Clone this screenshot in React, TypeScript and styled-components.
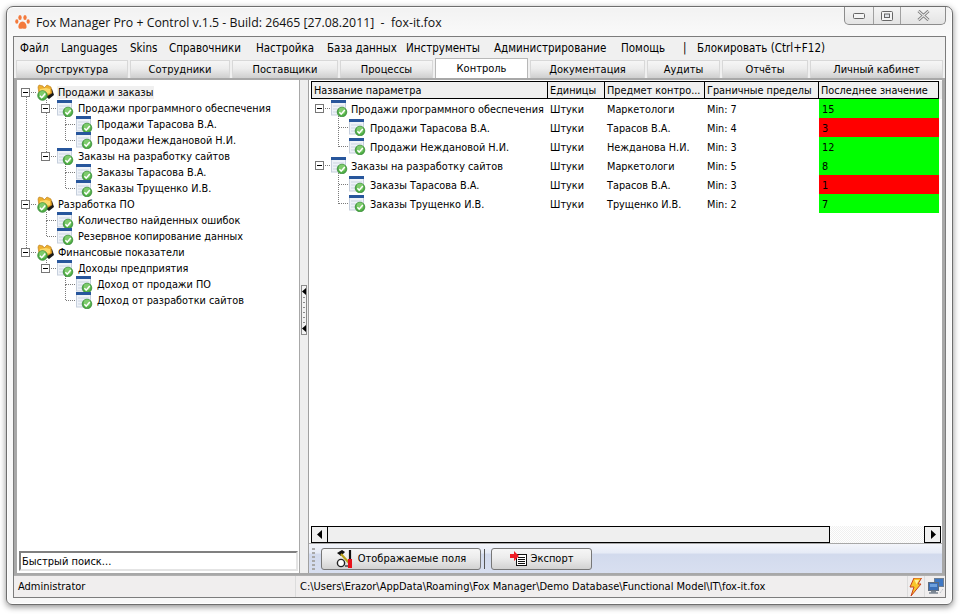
import React from 'react';
import styled, { createGlobalStyle } from 'styled-components';

const GlobalStyle = createGlobalStyle`
  html, body {
    margin: 0;
    background: #fff;
  }
  * {
    box-sizing: border-box;
  }
`;

const uiFont = `font-family: 'DejaVu Sans Condensed', 'DejaVu Sans', sans-serif; font-stretch: condensed; font-size: 10.8px;`;

const Root = styled.div`
  width: 961px;
  height: 616px;
  padding: 6px 8px 11px 6px;
  display: flex;
  overflow: hidden;
  ${uiFont}
  color: #000;
`;

const Win = styled.div`
  flex: 1;
  display: flex;
  flex-direction: column;
  padding: 0 6px 6px;
  border: 1px solid #6e6e6e;
  border-radius: 7px 7px 6px 6px;
  background: linear-gradient(180deg, #f2f2f2 0, #fafafa 30px, #f7f7f7 100%);
  box-shadow: 0 2px 6px rgba(0, 0, 0, 0.45), inset 0 0 0 1px rgba(255, 255, 255, 0.8);
`;

const TitleBar = styled.div`
  height: 29px;
  display: flex;
  align-items: flex-start;
  justify-content: space-between;
`;

const TitleLeft = styled.div`
  display: flex;
  align-items: center;
  gap: 6px;
  padding: 7px 0 0 2px;
`;

const TitleText = styled.span`
  font-family: 'Open Sans', sans-serif;
  font-stretch: normal;
  font-size: 12.3px;
  color: #111;
  white-space: pre;
`;

const CaptionGroup = styled.div`
  display: flex;
  width: 102px;
  height: 18px;
  border: 1px solid #8c8c8c;
  border-top: none;
  border-radius: 0 0 5px 5px;
  background: linear-gradient(180deg, #f4f4f4, #e4e4e4);
`;

const CaptionButton = styled.div<{ $w: number }>`
  width: ${(p) => p.$w}px;
  display: flex;
  align-items: center;
  justify-content: center;
  & + & {
    border-left: 1px solid #a0a0a0;
  }
`;

const Frame = styled.div`
  flex: 1;
  min-height: 0;
  display: flex;
  flex-direction: column;
  border: 1px solid #7c7c7c;
  background: #f0f0f0;
`;

const MenuBar = styled.div`
  height: 21px;
  display: flex;
  align-items: center;
  padding-left: 6px;
  background: #f0f0f0;
`;

const MenuItem = styled.span<{ $w: number }>`
  width: ${(p) => p.$w}px;
  white-space: nowrap;
  font-size: 11.5px;
`;

const TabStrip = styled.div`
  height: 20px;
  display: flex;
  align-items: flex-end;
  gap: 2px;
  padding-left: 2px;
`;

const Tab = styled.div<{ $w: number; $active?: boolean }>`
  width: ${(p) => p.$w}px;
  height: ${(p) => (p.$active ? 20 : 18)}px;
  display: flex;
  align-items: center;
  justify-content: center;
  white-space: nowrap;
  font-size: 11px;
  border: 1px solid ${(p) => (p.$active ? '#b8b8b8' : '#d8d8d8')};
  border-bottom: none;
  background: ${(p) =>
    p.$active ? '#ffffff' : 'linear-gradient(180deg, #f6f6f6 0%, #ececec 45%, #cfcfcf 100%)'};
`;

const PanelArea = styled.div`
  height: 497px;
  display: flex;
  border-style: solid;
  border-color: #a8a8a8;
  border-width: 2px 3px 2px 3px;
  background: #eeeeee;
`;

const LeftPanel = styled.div`
  width: 283px;
  display: flex;
  flex-direction: column;
  background: #fff;
  border-right: 1px solid #a8a8a8;
`;

const Tree = styled.div`
  position: relative;
  flex: 1;
  padding-top: 4px;
`;

const Lines = styled.svg`
  position: absolute;
  left: 0;
  top: 0;
  width: 100%;
  height: 100%;
  pointer-events: none;
`;

const TreeRow = styled.div<{ $indent: number }>`
  position: relative;
  height: 16px;
  display: flex;
  align-items: center;
  padding-left: ${(p) => p.$indent}px;
  white-space: nowrap;
`;

const ExpanderSlot = styled.span`
  width: 16px;
  flex: none;
  display: flex;
  align-items: center;
`;

const Expander = styled.span`
  position: relative;
  width: 9px;
  height: 9px;
  background: #fff;
  border: 1px solid #777;
  &::after {
    content: '';
    position: absolute;
    left: 1px;
    top: 3px;
    width: 5px;
    height: 1px;
    background: #000;
  }
`;

const NodeLabel = styled.span<{ $selected?: boolean; $gap: number }>`
  margin-left: ${(p) => p.$gap}px;
  padding: 0 1px;
  background: ${(p) => (p.$selected ? '#f0f0f0' : 'transparent')};
`;

const SearchBox = styled.div`
  height: 20px;
  margin: 1px 1px 2px 2px;
  padding: 1px 0 0 1px;
  line-height: 15px;
  font-size: 11px;
  border: 2px solid;
  border-color: #808080 #e4e4e4 #e4e4e4 #808080;
  background: #fff;
`;

const Splitter = styled.div`
  width: 9px;
  display: flex;
  align-items: center;
  justify-content: center;
  background: #eeeeee;
  border-right: 1px solid #a0a0a0;
`;

const SplitGrip = styled.div`
  width: 6px;
  height: 50px;
  margin-top: -34px;
  display: flex;
  flex-direction: column;
  align-items: center;
  justify-content: space-between;
  padding: 2px 0;
  border: 1px solid #8a8a8a;
  background: #f2f2f2;
`;

const SplitDots = styled.div`
  width: 2px;
  height: 26px;
  background: repeating-linear-gradient(180deg, #8a8a8a 0 1px, transparent 1px 5px);
`;

const RightPanel = styled.div`
  width: 633px;
  display: flex;
  flex-direction: column;
  background: #fff;
  padding-top: 1px;
`;

const columns = '237px 57px 100px 114px 120px';

const HeaderRow = styled.div`
  margin-left: 2px;
  height: 18px;
  display: grid;
  grid-template-columns: ${columns};
  background: #f0f0f0;
`;

const HeaderCell = styled.div`
  display: flex;
  align-items: center;
  padding: 1px 0 0 2px;
  white-space: nowrap;
  overflow: hidden;
  border: solid #000;
  border-width: 1px 1px 1px 0;
  &:first-child {
    border-left-width: 1px;
  }
`;

const Rows = styled.div`
  position: relative;
  flex: 1;
  margin-left: 2px;
`;

const Row = styled.div`
  position: relative;
  height: 19px;
  display: grid;
  grid-template-columns: ${columns};
`;

const NameCell = styled.div<{ $indent: number }>`
  display: flex;
  align-items: center;
  padding-left: ${(p) => p.$indent}px;
  white-space: nowrap;
`;

const RowLabel = styled(NodeLabel)`
  padding-top: 2px;
`;

const Cell = styled.div`
  display: flex;
  align-items: center;
  padding: 1px 0 0 2px;
  white-space: nowrap;
`;

const ValueCell = styled(Cell)<{ $alarm: boolean }>`
  padding-left: 3px;
  background: ${(p) => (p.$alarm ? '#ff0000' : '#00ff00')};
`;

const ScrollBar = styled.div`
  margin: 0 1px 0 2px;
  height: 17px;
  display: flex;
  background: repeating-conic-gradient(#f0f0f0 0 25%, #ffffff 0 50%) 0 0 / 2px 2px;
`;

const ScrollButton = styled.div`
  width: 17px;
  display: flex;
  align-items: center;
  justify-content: center;
  border: 1px solid #000;
  background: #f0f0f0;
`;

const ScrollThumb = styled.div`
  width: 503px;
  margin-left: -1px;
  border: 1px solid #000;
  background: #efefef;
`;

const ScrollTrack = styled.div`
  flex: 1;
`;

const Toolbar = styled.div`
  height: 30px;
  display: flex;
  align-items: center;
  padding-left: 3px;
  border-top: 1px solid #a8a8a8;
  background: linear-gradient(180deg, #f3f5fb 0, #e6ebf6 30%, #d2daed 36%, #d8dff0 100%);
`;

const ToolGrip = styled.div`
  width: 3px;
  height: 22px;
  margin-right: 6px;
  background: repeating-linear-gradient(180deg, #a8a8a8 0 2px, transparent 2px 4px);
`;

const ToolButton = styled.div<{ $w: number }>`
  width: ${(p) => p.$w}px;
  height: 22px;
  display: flex;
  align-items: center;
  justify-content: center;
  gap: 4px;
  border: 1px solid #777;
  border-radius: 3px;
  font-size: 11px;
  background: linear-gradient(180deg, #f6f6f6 0, #ececec 45%, #d2d2d2 100%);
`;

const ToolSeparator = styled.div`
  width: 1px;
  height: 20px;
  margin: 0 6px 0 3px;
  background: #555;
`;

const StatusBar = styled.div`
  flex: 1;
  display: flex;
  align-items: center;
  font-size: 11px;
  border-top: 1px solid #b0b0b0;
  background: #f0eeee;
`;

const StatusCell = styled.div<{ $w: number; $pad?: number }>`
  width: ${(p) => p.$w}px;
  height: 100%;
  flex: none;
  display: flex;
  align-items: center;
  padding-left: ${(p) => p.$pad ?? 4}px;
  white-space: nowrap;
  overflow: hidden;
  & + & {
    border-left: 1px solid #dcdcdc;
  }
`;

const Badge = ({ x, y }: { x: number; y: number }) => (
  <g transform={`translate(${x} ${y})`}>
    <circle cx="0" cy="0" r="4.8" fill="#4fae45" stroke="#3a8a3a" strokeWidth="0.8" />
    <circle cx="0" cy="-1" r="3.4" fill="#7ecb6c" />
    <path d="M-2.6 0.2 L-0.8 2.2 L2.8 -2" stroke="#fff" strokeWidth="1.5" fill="none" />
  </g>
);

const TableIcon = () => (
  <svg width="17" height="17" viewBox="0 0 17 17" style={{ flex: 'none' }}>
    <rect x="0.5" y="1" width="14" height="14" fill="#eef2f8" stroke="#c6cfdc" />
    <rect x="0" y="0" width="15" height="3" fill="#27569c" />
    <path d="M2 6h11M2 9h5M2 12h5" stroke="#ccd5e2" strokeWidth="1" />
    <Badge x={11} y={12} />
  </svg>
);

const FolderIcon = () => (
  <svg width="17" height="17" viewBox="0 0 17 17" style={{ flex: 'none' }}>
    <path d="M10 3 L15 5 L17 11 L12 15 L8 12 Z" fill="#1a1a1a" />
    <path d="M1 3 L2 1 L6 2 L7 4 L10 1 L14 3 L15 9 L10 12 L2 10 Z" fill="#eeb02e" stroke="#b5791a" strokeWidth="0.6" />
    <path d="M3 5 L9 4 L13 5 L13 9 L9 10 L3 8 Z" fill="#fbd96a" />
    <Badge x={5.5} y={11.5} />
  </svg>
);

const PawIcon = () => (
  <svg width="15" height="15" viewBox="0 0 15 15">
    <g fill="#f47a3c">
      <ellipse cx="1.8" cy="6.5" rx="1.6" ry="2.2" />
      <ellipse cx="5" cy="2.6" rx="1.7" ry="2.5" />
      <ellipse cx="10" cy="2.6" rx="1.7" ry="2.5" />
      <ellipse cx="13.2" cy="6.5" rx="1.6" ry="2.2" />
      <path d="M7.5 6.5 C10 6.5 12 10 11.5 12.5 C11 14.5 9 13.5 7.5 13.5 C6 13.5 4 14.5 3.5 12.5 C3 10 5 6.5 7.5 6.5 Z" />
    </g>
  </svg>
);

const ToolsIcon = () => (
  <svg width="18" height="18" viewBox="0 0 18 18">
    <circle cx="5" cy="13" r="3.6" fill="#fff" stroke="#222" strokeWidth="1.4" />
    <path d="M1 3 L6 0 L9 2 L5 6 Z" fill="#111" />
    <path d="M5 4 L14 14" stroke="#b9a21b" strokeWidth="2.2" />
    <path d="M14 0 V9" stroke="#111" strokeWidth="2.2" />
    <rect x="12" y="9" width="4" height="9" fill="#e8121b" />
    <path d="M9 16h3" stroke="#222" strokeWidth="1.2" />
  </svg>
);

const ExportIcon = () => (
  <svg width="17" height="15" viewBox="0 0 17 15">
    <rect x="6.5" y="3.5" width="10" height="11" fill="#fff" stroke="#111" />
    <path d="M8 6.5h7M8 8.5h7M8 10.5h7M8 12.5h7" stroke="#111" strokeWidth="1" />
    <path d="M0 3 H4 V0 L9 5 L4 10 V7 H0 Z" fill="#ee1c25" />
  </svg>
);

const BoltIcon = () => (
  <svg width="13" height="18" viewBox="0 0 13 18">
    <path d="M5 0 H12.5 L9 6 H12 L2 18 L5 9 H1 Z" fill="#f8c52a" stroke="#c8421a" strokeWidth="1" />
    <path d="M5.5 2 H10 L7.5 6.5" fill="#fff19a" />
  </svg>
);

const NetworkIcon = () => (
  <svg width="16" height="17" viewBox="0 0 16 17">
    <rect x="6.5" y="0.5" width="9" height="8" fill="#3f78c4" stroke="#6f7f92" />
    <rect x="0.5" y="4.5" width="10" height="8" fill="#3a6fb8" stroke="#5f6d7e" />
    <rect x="2" y="6" width="7" height="3" fill="#6ea0dc" />
    <path d="M1 15h9M3 13.5h5" stroke="#7c8794" strokeWidth="1.4" />
    <path d="M12 15 L15 11" stroke="#b0b8c2" strokeWidth="1" strokeDasharray="1 1" />
  </svg>
);

const ArrowLeft = () => (
  <svg width="6" height="9" viewBox="0 0 6 9">
    <path d="M5 0 V9 L0 4.5 Z" fill="#000" />
  </svg>
);

const ArrowRight = () => (
  <svg width="6" height="9" viewBox="0 0 6 9">
    <path d="M1 0 V9 L6 4.5 Z" fill="#000" />
  </svg>
);

const GripArrow = () => (
  <svg width="4" height="7" viewBox="0 0 4 7">
    <path d="M4 0 V7 L0 3.5 Z" fill="#000" />
  </svg>
);

type Node = { level: number; name: string; expanded?: boolean };

// рисует пунктирные линии дерева
const TreeLines = ({
  nodes,
  rowH,
  top,
  rail,
  iconLeft,
  rootRail,
}: {
  nodes: Node[];
  rowH: number;
  top: number;
  rail: (level: number) => number;
  iconLeft: (level: number) => number;
  rootRail: boolean;
}) => {
  const center = (i: number) => Math.floor(top + rowH * i + rowH / 2) + 0.5;
  const parts: React.ReactNode[] = [];
  nodes.forEach((n, i) => {
    const x = rail(n.level) + 0.5;
    parts.push(<path key={`h${i}`} d={`M${x} ${center(i)} H${iconLeft(n.level)}`} />);
    if (n.level === 0 && !rootRail) return;
    let j = i - 1;
    while (j >= 0 && nodes[j].level > n.level) j--;
    if (j < 0) return;
    const from = nodes[j].level === n.level ? center(j) : center(j) + 7;
    parts.push(<path key={`v${i}`} d={`M${x} ${from} V${center(i)}`} />);
  });
  return (
    <Lines>
      <g stroke="#7a7a7a" strokeDasharray="1 1" shapeRendering="crispEdges" fill="none">
        {parts}
      </g>
    </Lines>
  );
};

const menu: [string, number][] = [
  ['Файл', 41],
  ['Languages', 69],
  ['Skins', 39],
  ['Справочники', 87],
  ['Настройка', 71],
  ['База данных', 79],
  ['Инструменты', 88],
  ['Администрирование', 127],
  ['Помощь', 62],
  ['|', 14],
  ['Блокировать (Ctrl+F12)', 150],
];

const tabs: [string, number, boolean?][] = [
  ['Оргструктура', 112],
  ['Сотрудники', 100],
  ['Поставщики', 106],
  ['Процессы', 93],
  ['Контроль', 93, true],
  ['Документация', 115],
  ['Аудиты', 73],
  ['Отчёты', 86],
  ['Личный кабинет', 133],
];

const leftNodes: Node[] = [
  { level: 0, name: 'Продажи и заказы', expanded: true },
  { level: 1, name: 'Продажи программного обеспечения', expanded: true },
  { level: 2, name: 'Продажи Тарасова В.А.' },
  { level: 2, name: 'Продажи Неждановой Н.И.' },
  { level: 1, name: 'Заказы на разработку сайтов', expanded: true },
  { level: 2, name: 'Заказы Тарасова В.А.' },
  { level: 2, name: 'Заказы Трущенко И.В.' },
  { level: 0, name: 'Разработка ПО', expanded: true },
  { level: 1, name: 'Количество найденных ошибок' },
  { level: 1, name: 'Резервное копирование данных' },
  { level: 0, name: 'Финансовые показатели', expanded: true },
  { level: 1, name: 'Доходы предприятия', expanded: true },
  { level: 2, name: 'Доход от продажи ПО' },
  { level: 2, name: 'Доход от разработки сайтов' },
];

type Param = Node & { unit: string; subject: string; limit: string; value: number; alarm: boolean };

const params: Param[] = [
  { level: 0, name: 'Продажи программного обеспечения', expanded: true, unit: 'Штуки', subject: 'Маркетологи', limit: 'Min: 7', value: 15, alarm: false },
  { level: 1, name: 'Продажи Тарасова В.А.', unit: 'Штуки', subject: 'Тарасов В.А.', limit: 'Min: 4', value: 3, alarm: true },
  { level: 1, name: 'Продажи Неждановой Н.И.', unit: 'Штуки', subject: 'Нежданова Н.И.', limit: 'Min: 3', value: 12, alarm: false },
  { level: 0, name: 'Заказы на разработку сайтов', expanded: true, unit: 'Штуки', subject: 'Маркетологи', limit: 'Min: 5', value: 8, alarm: false },
  { level: 1, name: 'Заказы Тарасова В.А.', unit: 'Штуки', subject: 'Тарасов В.А.', limit: 'Min: 3', value: 1, alarm: true },
  { level: 1, name: 'Заказы Трущенко И.В.', unit: 'Штуки', subject: 'Трущенко И.В.', limit: 'Min: 2', value: 7, alarm: false },
];

const headers = ['Название параметра', 'Единицы', 'Предмет контро...', 'Граничные пределы', 'Последнее значение'];

export default function App() {
  return (
    <>
      <GlobalStyle />
      <Root>
        <Win>
          <TitleBar>
            <TitleLeft>
              <PawIcon />
              <TitleText>Fox Manager Pro + Control v.1.5 - Build: 26465 [27.08.2011]  -  fox-it.fox</TitleText>
            </TitleLeft>
            <CaptionGroup>
              <CaptionButton $w={28}>
                <svg width="12" height="6" viewBox="0 0 12 6">
                  <rect x="0.5" y="0.5" width="11" height="5" rx="1" fill="#f4f4f4" stroke="#666" />
                </svg>
              </CaptionButton>
              <CaptionButton $w={27}>
                <svg width="12" height="10" viewBox="0 0 12 10">
                  <rect x="0.5" y="0.5" width="11" height="9" rx="1" fill="#f4f4f4" stroke="#666" />
                  <rect x="3.5" y="3" width="5" height="3.5" fill="#dfe3e8" stroke="#666" />
                </svg>
              </CaptionButton>
              <CaptionButton $w={45}>
                <svg width="13" height="11" viewBox="0 0 13 11">
                  <path d="M1.5 1 L11.5 10 M11.5 1 L1.5 10" stroke="#777" strokeWidth="3" />
                  <path d="M1.5 1 L11.5 10 M11.5 1 L1.5 10" stroke="#e6e6e6" strokeWidth="1.2" />
                </svg>
              </CaptionButton>
            </CaptionGroup>
          </TitleBar>
          <Frame>
            <MenuBar>
              {menu.map(([label, w]) => (
                <MenuItem key={label} $w={w}>
                  {label}
                </MenuItem>
              ))}
            </MenuBar>
            <TabStrip>
              {tabs.map(([label, w, active]) => (
                <Tab key={label} $w={w} $active={active}>
                  {label}
                </Tab>
              ))}
            </TabStrip>
            <PanelArea>
              <LeftPanel>
                <Tree>
                  <TreeLines
                    nodes={leftNodes}
                    rowH={16}
                    top={4}
                    rail={(l) => Math.round(9 + 19.5 * l)}
                    iconLeft={(l) => Math.round(20 + 19.5 * l)}
                    rootRail
                  />
                  {leftNodes.map((n, i) => (
                    <TreeRow key={n.name} $indent={Math.round(4 + 19.5 * n.level)}>
                      <ExpanderSlot>{n.expanded && n.level < 2 && <Expander />}</ExpanderSlot>
                      {n.level === 0 ? <FolderIcon /> : <TableIcon />}
                      <NodeLabel $gap={3} $selected={i === 0}>
                        {n.name}
                      </NodeLabel>
                    </TreeRow>
                  ))}
                </Tree>
                <SearchBox>Быстрый поиск...</SearchBox>
              </LeftPanel>
              <Splitter>
                <SplitGrip>
                  <GripArrow />
                  <SplitDots />
                  <GripArrow />
                </SplitGrip>
              </Splitter>
              <RightPanel>
                <HeaderRow>
                  {headers.map((h) => (
                    <HeaderCell key={h}>{h}</HeaderCell>
                  ))}
                </HeaderRow>
                <Rows>
                  <TreeLines
                    nodes={params}
                    rowH={19}
                    top={0}
                    rail={(l) => 9 + 18 * l}
                    iconLeft={(l) => 20 + 18 * l}
                    rootRail={false}
                  />
                  {params.map((p) => (
                    <Row key={p.name}>
                      <NameCell $indent={4 + 18 * p.level}>
                        <ExpanderSlot>{p.expanded && <Expander />}</ExpanderSlot>
                        <TableIcon />
                        <RowLabel $gap={p.level ? 3 : 2}>{p.name}</RowLabel>
                      </NameCell>
                      <Cell>{p.unit}</Cell>
                      <Cell>{p.subject}</Cell>
                      <Cell>{p.limit}</Cell>
                      <ValueCell $alarm={p.alarm}>{p.value}</ValueCell>
                    </Row>
                  ))}
                </Rows>
                <ScrollBar>
                  <ScrollButton>
                    <ArrowLeft />
                  </ScrollButton>
                  <ScrollThumb />
                  <ScrollTrack />
                  <ScrollButton>
                    <ArrowRight />
                  </ScrollButton>
                </ScrollBar>
                <Toolbar>
                  <ToolGrip />
                  <ToolButton $w={160}>
                    <ToolsIcon />
                    Отображаемые поля
                  </ToolButton>
                  <ToolSeparator />
                  <ToolButton $w={101}>
                    <ExportIcon />
                    Экспорт
                  </ToolButton>
                </Toolbar>
              </RightPanel>
            </PanelArea>
            <StatusBar>
              <StatusCell $w={281}>Administrator</StatusCell>
              <StatusCell $w={612}>
                C:\Users\Erazor\AppData\Roaming\Fox Manager\Demo Database\Functional Model\IT\fox-it.fox
              </StatusCell>
              <StatusCell $w={17} $pad={1}>
                <BoltIcon />
              </StatusCell>
              <StatusCell $w={20} $pad={3}>
                <NetworkIcon />
              </StatusCell>
            </StatusBar>
          </Frame>
        </Win>
      </Root>
    </>
  );
}
